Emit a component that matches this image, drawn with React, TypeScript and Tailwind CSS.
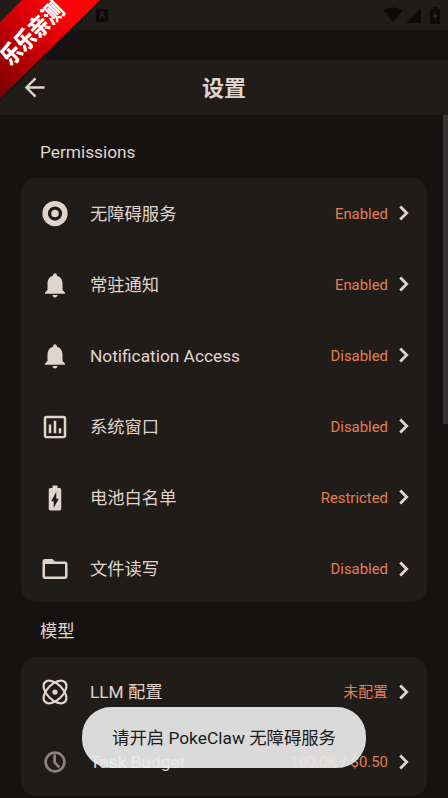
import type { ReactNode } from "react";

type RowData = {
  icon: ReactNode;
  label: string;
  status: string;
  height: string;
};

const bell = (
  <path d="M12 22c1.1 0 2-.9 2-2h-4c0 1.1.89 2 2 2zm6-6v-5c0-3.07-1.64-5.64-4.5-6.32V4c0-.83-.67-1.5-1.5-1.5s-1.5.67-1.5 1.5v.68C7.63 5.36 6 7.92 6 11v5l-2 2v1h16v-1l-2-2z" />
);

const permissions: RowData[] = [
  {
    icon: (
      <>
        <circle cx="12" cy="11.6" r="7.9" fill="none" stroke="currentColor" strokeWidth="4.4" />
        <circle cx="12" cy="11.6" r="3" />
      </>
    ),
    label: "无障碍服务",
    status: "Enabled",
    height: "h-[71px]",
  },
  { icon: bell, label: "常驻通知", status: "Enabled", height: "h-[71px]" },
  { icon: bell, label: "Notification Access", status: "Disabled", height: "h-[71px]" },
  {
    icon: (
      <path d="M9 17H7v-7h2v7zm4 0h-2V7h2v10zm4 0h-2v-4h2v4zm2 2.1H5V5h14v14.1zm0-16.1H5c-1.1 0-2 .9-2 2v14c0 1.1.9 2 2 2h14c1.1 0 2-.9 2-2V5c0-1.1-.9-2-2-2z" />
    ),
    label: "系统窗口",
    status: "Disabled",
    height: "h-[71px]",
  },
  {
    icon: (
      <path d="M15.67 4H14V2h-4v2H8.33C7.6 4 7 4.6 7 5.33v15.33C7 21.4 7.6 22 8.33 22h7.33c.74 0 1.34-.6 1.34-1.33V5.33C17 4.6 16.4 4 15.67 4zM11 20v-5.5H9L13 7v5.5h2L11 20z" />
    ),
    label: "电池白名单",
    status: "Restricted",
    height: "h-[71px]",
  },
  {
    icon: (
      <path d="M20 6h-8l-2-2H4c-1.1 0-1.99.9-1.99 2L2 18c0 1.1.9 2 2 2h16c1.1 0 2-.9 2-2V8c0-1.1-.9-2-2-2zm0 12H4V8h16v10z" />
    ),
    label: "文件读写",
    status: "Disabled",
    height: "h-[69px] pt-[2px]",
  },
];

const models: RowData[] = [
  {
    icon: (
      <g fill="none" stroke="currentColor" strokeWidth="1.8">
        <ellipse cx="12" cy="12" rx="11.2" ry="6.3" transform="rotate(45 12 12)" />
        <ellipse cx="12" cy="12" rx="11.2" ry="6.3" transform="rotate(-45 12 12)" />
        <circle cx="12" cy="12" r="2.1" fill="currentColor" stroke="none" />
      </g>
    ),
    label: "LLM 配置",
    status: "未配置",
    height: "h-[70px]",
  },
  {
    icon: (
      <g fill="none" stroke="currentColor" strokeWidth="2.2" opacity="0.55">
        <circle cx="12" cy="12" r="7.5" />
        <path d="M11.7 6V12.3L15.5 16.3" />
      </g>
    ),
    label: "Task Budget",
    status: "100.0K / $0.50",
    height: "h-[69px]",
  },
];

export default function App() {
  return (
    <main className="relative h-[798px] w-[448px] overflow-hidden bg-[#151211] font-['Roboto','Noto_Sans_CJK_SC',sans-serif] text-[#e0d5cc]">
      <StatusBar />
      <header className="mt-[30px] grid h-[55px] grid-cols-[1fr_auto_1fr] items-center bg-[#201c19] px-6">
        <svg viewBox="0 0 24 24" className="size-[23px]" fill="none" stroke="currentColor" strokeWidth="2.5">
          <path d="M21.5 12H3M12 2.5L2.5 12L12 21.5" />
        </svg>
        <h1 className="pt-0.5 text-[22px] font-bold leading-none">设置</h1>
      </header>

      <div className="flex">
        <div className="flex-1 pl-[21px] pr-4">
          <SectionTitle className="h-[63px] pt-[13px]">Permissions</SectionTitle>
          <SettingsCard rows={permissions} />
          <SectionTitle className="h-[55px] pt-[5px]">模型</SectionTitle>
          <SettingsCard rows={models} />
        </div>
        <div className="h-[309px] w-[5px] bg-[#353334]" />
      </div>

      <Ribbon />

      <div className="absolute left-[82px] top-[707px] flex h-[61px] w-[284px] items-center justify-center rounded-[29px] bg-[#eaeaea]/92 pt-[2px] text-[17.35px] text-[#1c1c1c]">
        请开启 PokeClaw 无障碍服务
      </div>
    </main>
  );
}

function StatusBar() {
  return (
    <div className="flex h-[30px] items-center justify-between bg-[#201c19] pl-[77px] pr-2 text-[#0d0a09]">
      <div className="flex gap-[13px]">
        <span className="h-[13px] w-[6px] bg-[#0d0a09]" />
        <span className="flex h-[13px] w-[12px] items-center justify-center rounded-[1px] bg-[#0d0a09] text-[9px] font-bold leading-none text-[#2a2624]">
          A
        </span>
      </div>
      <div className="flex items-center">
        <svg viewBox="0 0 20 16" className="h-4 w-5" fill="currentColor">
          <path d="M0.5 3.5C6-.5 14-.5 19.5 3.5L10 15.5z" />
        </svg>
        <svg viewBox="0 0 15 15" className="ml-[3px] size-[15px]" fill="currentColor">
          <path d="M15 0V15H0z" />
        </svg>
        <svg viewBox="0 0 10 17" className="ml-[9px] h-[17px] w-[10px]" fill="currentColor">
          <path d="M3 0h4v2h3v15H0V2h3z" />
          <path d="M5.5 4.5L2.5 10H5v4l3-6H5.500z" fill="#2a2624" />
        </svg>
      </div>
    </div>
  );
}

function SectionTitle({ children, className }: { children: ReactNode; className: string }) {
  return <h2 className={`flex items-center pl-[19px] text-[17.3px] ${className}`}>{children}</h2>;
}

function SettingsCard({ rows }: { rows: RowData[] }) {
  return (
    <section className="overflow-hidden rounded-[15px] bg-[#201c19]">
      {rows.map((row, index) => (
        <div key={row.label} className={`flex items-center pl-[19px] ${row.height}`}>
          <svg viewBox="0 0 24 24" className="size-[30px] shrink-0" fill="currentColor" fillRule="evenodd">
            {row.icon}
          </svg>
          <div
            className={`ml-5 flex h-full flex-1 items-center pr-[18px] ${
              index < rows.length - 1 ? "border-b border-[#1e1a18]" : ""
            }`}
          >
            <span className="flex-1 pt-[3px] text-[17.3px]">{row.label}</span>
            <span className="pt-[2px] text-[14.9px] text-[#e07f55]">{row.status}</span>
            <svg viewBox="0 0 10 16" className="ml-[11px] h-4 w-[10px]" fill="none" stroke="currentColor" strokeWidth="2.8">
              <path d="M1.2 1.5L7.7 8L1.2 14.5" />
            </svg>
          </div>
        </div>
      ))}
    </section>
  );
}

function Ribbon() {
  return (
    <div className="absolute left-0 top-0 size-[104px]">
      <svg viewBox="0 0 104 104" className="absolute inset-0 size-full">
        <defs>
          <linearGradient id="ribbon" gradientUnits="userSpaceOnUse" x1="0" y1="98" x2="98" y2="0">
            <stop offset="0" stopColor="#780000" />
            <stop offset="0.5" stopColor="#d40005" />
            <stop offset="0.75" stopColor="#fa0509" />
            <stop offset="1" stopColor="#ff0508" />
          </linearGradient>
        </defs>
        <path d="M22 0H102L0 101V22z" fill="#000" opacity="0.2" />
        <path d="M22 0H100L0 98.5V22z" fill="url(#ribbon)" />
      </svg>
      <span className="absolute left-[33px] top-[34px] -translate-x-1/2 -translate-y-1/2 -rotate-45 scale-y-120 whitespace-nowrap text-[19.5px] font-black leading-[0.8] text-white">
        乐乐亲测
      </span>
    </div>
  );
}
